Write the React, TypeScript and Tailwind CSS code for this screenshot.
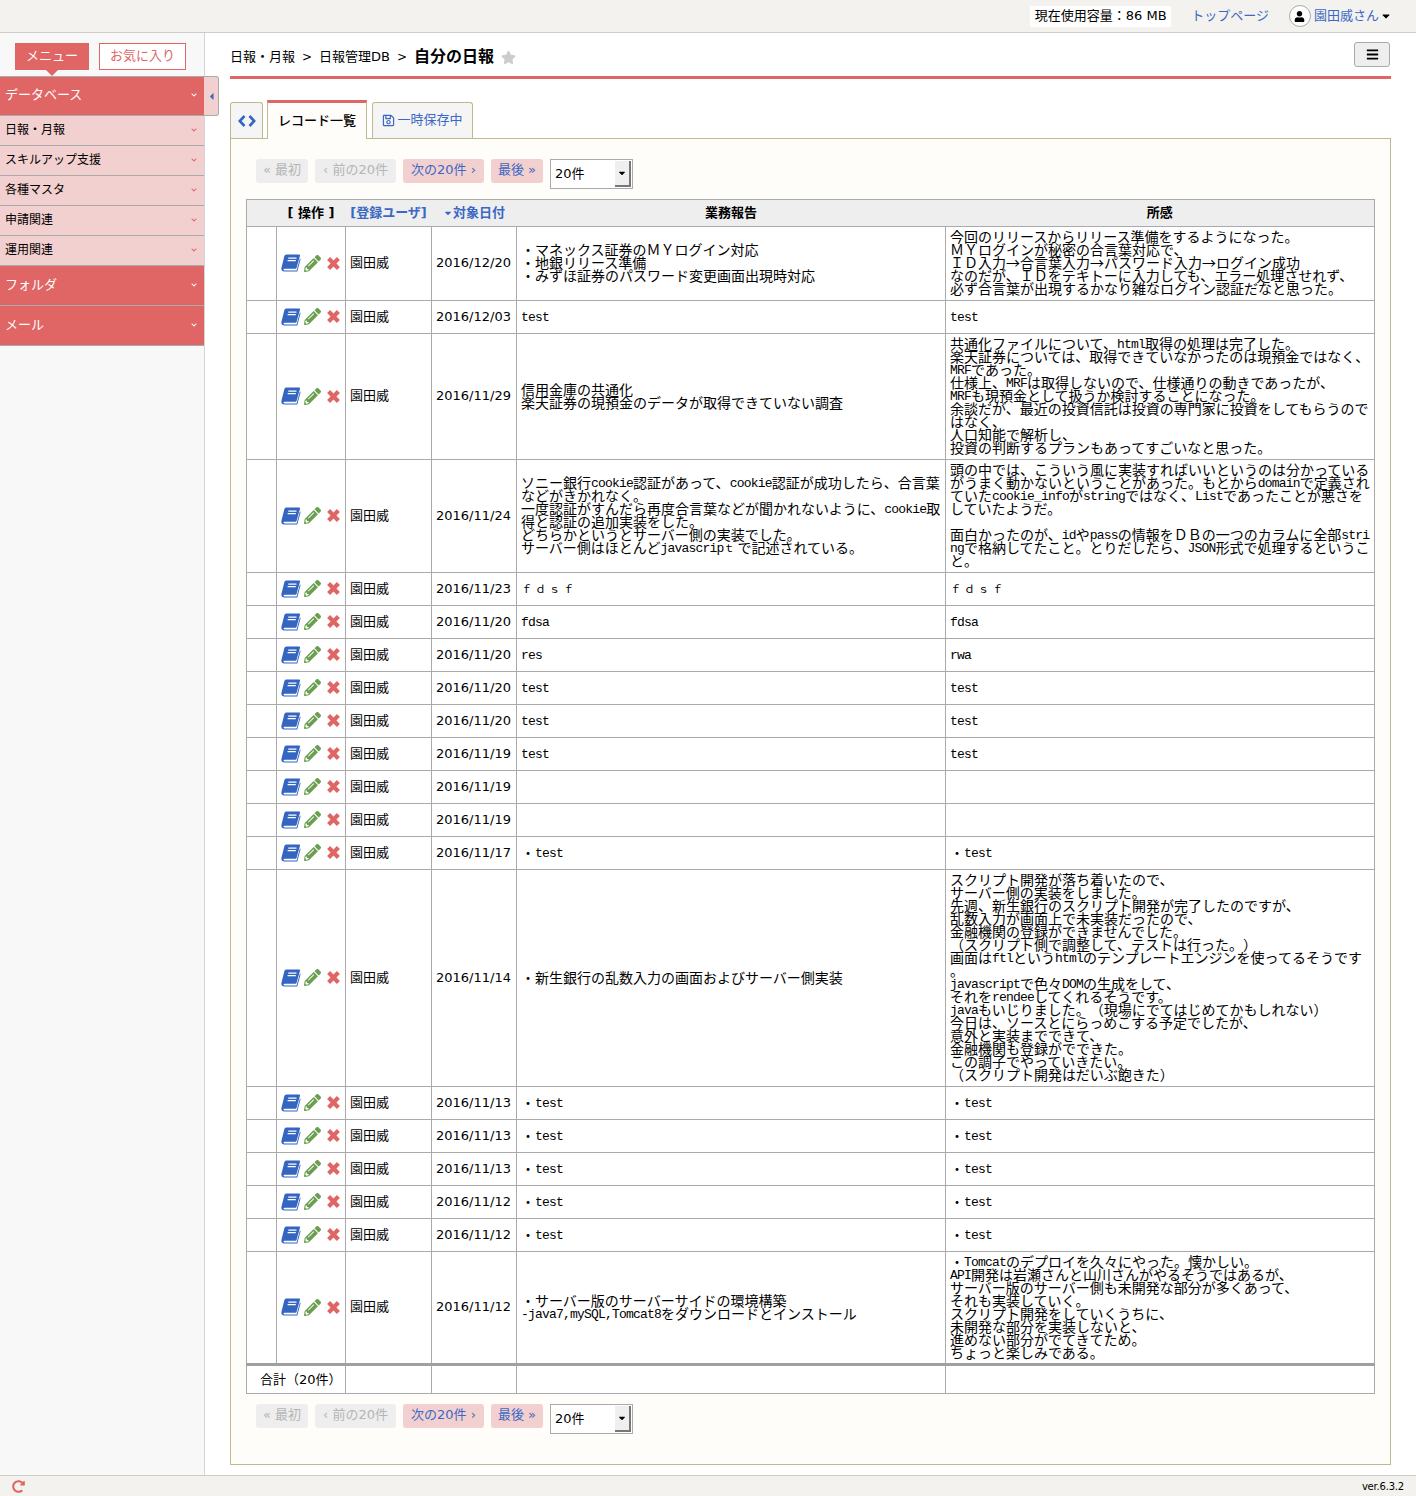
import React from "react";
import { FaBars, FaCaretDown, FaCaretLeft, FaChevronDown, FaPencilAlt, FaRedoAlt, FaRegSave, FaStar, FaUser } from "react-icons/fa";

type Row = { h: string; date: string; report: string[]; note: string[] };

const rows: Row[] = [
  {
    h: "h-[74px]",
    date: "2016/12/20",
    report: ["・マネックス証券のＭＹログイン対応", "・地銀リリース準備", "・みずほ証券のパスワード変更画面出現時対応"],
    note: [
      "今回のリリースからリリース準備をするようになった。",
      "ＭＹログインが秘密の合言葉対応で、",
      "ＩＤ入力→合言葉入力→パスワード入力→ログイン成功",
      "なのだが、ＩＤをテキトーに入力しても、エラー処理させれず、",
      "必ず合言葉が出現するかなり雑なログイン認証だなと思った。",
    ],
  },
  { h: "h-[33px]", date: "2016/12/03", report: ["test"], note: ["test"] },
  {
    h: "h-[126px]",
    date: "2016/11/29",
    report: ["信用金庫の共通化", "楽天証券の現預金のデータが取得できていない調査"],
    note: [
      "共通化ファイルについて、html取得の処理は完了した。",
      "楽天証券については、取得できていなかったのは現預金ではなく、",
      "MRFであった。",
      "仕様上、MRFは取得しないので、仕様通りの動きであったが、",
      "MRFも現預金として扱うか検討することになった。",
      "余談だが、最近の投資信託は投資の専門家に投資をしてもらうので",
      "はなく、",
      "人口知能で解析し、",
      "投資の判断するプランもあってすごいなと思った。",
    ],
  },
  {
    h: "h-[113px]",
    date: "2016/11/24",
    report: [
      "ソニー銀行cookie認証があって、cookie認証が成功したら、合言葉",
      "などがきかれなく。",
      "一度認証がすんだら再度合言葉などが聞かれないように、cookie取",
      "得と認証の追加実装をした。",
      "どちらかというとサーバー側の実装でした。",
      "サーバー側はほとんどjavascripｔで記述されている。",
    ],
    note: [
      "頭の中では、こういう風に実装すればいいというのは分かっている",
      "がうまく動かないということがあった。もとからdomainで定義され",
      "ていたcookie_infoがstringではなく、Listであったことが悪さを",
      "していたようだ。",
      "",
      "面白かったのが、idやpassの情報をＤＢの一つのカラムに全部stri",
      "ngで格納してたこと。とりだしたら、JSON形式で処理するというこ",
      "と。",
    ],
  },
  { h: "h-[33px]", date: "2016/11/23", report: ["ｆｄｓｆ"], note: ["ｆｄｓｆ"] },
  { h: "h-[33px]", date: "2016/11/20", report: ["fdsa"], note: ["fdsa"] },
  { h: "h-[33px]", date: "2016/11/20", report: ["res"], note: ["rwa"] },
  { h: "h-[33px]", date: "2016/11/20", report: ["test"], note: ["test"] },
  { h: "h-[33px]", date: "2016/11/20", report: ["test"], note: ["test"] },
  { h: "h-[33px]", date: "2016/11/19", report: ["test"], note: ["test"] },
  { h: "h-[33px]", date: "2016/11/19", report: [], note: [] },
  { h: "h-[33px]", date: "2016/11/19", report: [], note: [] },
  { h: "h-[33px]", date: "2016/11/17", report: ["・test"], note: ["・test"] },
  {
    h: "h-[217px]",
    date: "2016/11/14",
    report: ["・新生銀行の乱数入力の画面およびサーバー側実装"],
    note: [
      "スクリプト開発が落ち着いたので、",
      "サーバー側の実装をしました。",
      "先週、新生銀行のスクリプト開発が完了したのですが、",
      "乱数入力が画面上で未実装だったので、",
      "金融機関の登録ができませんでした。",
      "（スクリプト側で調整して、テストは行った。）",
      "画面はftlというhtmlのテンプレートエンジンを使ってるそうです",
      "。",
      "javascriptで色々DOMの生成をして、",
      "それをrendeeしてくれるそうです。",
      "javaもいじりました。（現場にでてはじめてかもしれない）",
      "今日は、ソースとにらっめこする予定でしたが、",
      "意外と実装までできて、",
      "金融機関も登録がでできた。",
      "この調子でやっていきたい。",
      "（スクリプト開発はだいぶ飽きた）",
    ],
  },
  { h: "h-[33px]", date: "2016/11/13", report: ["・test"], note: ["・test"] },
  { h: "h-[33px]", date: "2016/11/13", report: ["・test"], note: ["・test"] },
  { h: "h-[33px]", date: "2016/11/13", report: ["・test"], note: ["・test"] },
  { h: "h-[33px]", date: "2016/11/12", report: ["・test"], note: ["・test"] },
  { h: "h-[33px]", date: "2016/11/12", report: ["・test"], note: ["・test"] },
  {
    h: "h-[113px]",
    date: "2016/11/12",
    report: ["・サーバー版のサーバーサイドの環境構築", "-java7,mySQL,Tomcat8をダウンロードとインストール"],
    note: [
      "・Tomcatのデプロイを久々にやった。懐かしい。",
      "API開発は岩瀬さんと山川さんがやるそうではあるが、",
      "サーバー版のサーバー側も未開発な部分が多くあって、",
      "それも実装していく。",
      "スクリプト開発をしていくうちに、",
      "未開発な部分を実装しないと、",
      "進めない部分がでてきてため。",
      "ちょっと楽しみである。",
    ],
  },
];

function MemoLine({ text }: { text: string }) {
  const parts = text.split(/([\x20-\x7e]+|[ｆｄｓｔ]+)/).filter(Boolean);
  return (
    <div className="h-[13px] whitespace-nowrap">
      {parts.map((p, i) =>
        /^[\x20-\x7e]+$/.test(p) ? (
          <span key={i} className="align-[1px] text-[13px] leading-[10px] tracking-[-0.8px] [font-family:'Liberation_Mono',monospace]">
            {p}
          </span>
        ) : /^[ｆｄｓｔ]+$/.test(p) ? (
          <span key={i} className="align-[1px] text-[11px] leading-[10px] tracking-[3px]">
            {p}
          </span>
        ) : (
          <span key={i}>{p}</span>
        ),
      )}
    </div>
  );
}

function Memo({ lines }: { lines: string[] }) {
  return (
    <div className="pb-[2px] text-[14px] leading-[13px] text-black [text-spacing-trim:space-all] [font-family:'Noto_Sans_CJK_JP',sans-serif]">
      {lines.map((l, i) => (
        <MemoLine key={i} text={l} />
      ))}
    </div>
  );
}

function BookIcon() {
  return (
    <svg width="20" height="18" viewBox="0 0 20 18" className="shrink-0">
      <path
        d="M5.2 0.5H18a1 1 0 0 1 1 1.3L15.6 13.8a1.2 1.2 0 0 1-1.2.9H3.6c-1.3 0-1.5 1.7 0 1.7h12l3.2-11.6h.9L16.3 17.5H3C.7 17.5 0 15.6.5 13.6L3.4 2A2 2 0 0 1 5.200.5Z"
        fill="#3465c1"
      />
      <path d="M7.300 4.200h8.200M6.600 6.700h8.200" stroke="#fff" strokeWidth="1.300" />
    </svg>
  );
}

function CrossIcon() {
  return (
    <svg width="15" height="15" viewBox="0 0 15 15" className="ml-[5px] shrink-0">
      <path d="M2.600 2.600 12.400 12.400M12.400 2.600 2.600 12.400" stroke="#e06565" strokeWidth="4.200" />
    </svg>
  );
}

function CodeIcon() {
  return (
    <svg width="18" height="12" viewBox="0 0 18 12">
      <path d="M6.500 1 1.800 6l4.700 5M11.500 1l4.700 5-4.700 5" fill="none" stroke="#3465c1" strokeWidth="2.600" />
    </svg>
  );
}

function Pager() {
  return (
    <div className="flex items-start gap-[7px] pl-[10px]">
      <div className="flex h-[24px] w-[52px] items-center justify-center rounded-[3px] bg-[#eeeeee] pb-[2px] text-[13px] text-[#b5b5b5]">« 最初</div>
      <div className="flex h-[24px] w-[81px] items-center justify-center rounded-[3px] bg-[#eeeeee] pb-[2px] text-[13px] text-[#b5b5b5]">‹ 前の20件</div>
      <div className="flex h-[24px] w-[81px] items-center justify-center rounded-[3px] bg-[#f3d0d0] pb-[2px] text-[13px] text-[#3a68c4]">次の20件 ›</div>
      <div className="flex h-[24px] w-[52px] items-center justify-center rounded-[3px] bg-[#f3d0d0] pb-[2px] text-[13px] text-[#3a68c4]">最後 »</div>
      <div className="flex h-[30px] w-[83px] items-stretch border border-[#aaaaaa] bg-white">
        <div className="flex-1 pl-[4px] pt-[4px] text-[13px] text-black">20件</div>
        <div className="my-[1px] mr-[1px] flex w-[16px] items-center justify-center border-b-2 border-r-2 border-b-[#777777] border-r-[#777777] bg-[#efefef]">
          <FaCaretDown size={10} color="#000" />
        </div>
      </div>
    </div>
  );
}

function MenuHead({ label, first }: { label: string; first?: boolean }) {
  return (
    <div className={`flex items-center justify-between border-b border-[#aaaaaa] bg-[#e06565] pb-[2px] pl-[5px] pr-[7px] text-[13px] text-white ${first ? "h-[39px]" : "h-[40px]"}`}>
      <span>{label}</span>
      <FaChevronDown size={6} color="#fff" />
    </div>
  );
}

function MenuItem({ label }: { label: string }) {
  return (
    <div className="flex h-[30px] items-center justify-between border-b border-[#aaaaaa] bg-[#f3d0d0] pb-[2px] pl-[5px] pr-[7px] text-[12px] text-black">
      <span>{label}</span>
      <FaChevronDown size={6} color="#e06565" />
    </div>
  );
}

const cell = "border border-[#aaaaaa] p-0";
const totalCell = "border border-t-[3px] border-[#aaaaaa] border-t-[#a0a0a0] p-0";

export default function App() {
  return (
    <div className="flex h-[1496px] w-[1416px] flex-col overflow-hidden bg-white text-black [font-family:'DejaVu_Sans','Noto_Sans_CJK_JP',sans-serif]">
      <header className="flex h-[33px] shrink-0 items-center justify-end border-b border-[#cfcdc8] bg-[#f3f2ee] pr-[24px]">
        <div className="flex h-[21px] w-[141px] items-center justify-center bg-white text-[13px] text-black">現在使用容量：86 MB</div>
        <a className="ml-[20px] text-[13px] text-[#3a68c4]">トップページ</a>
        <div className="ml-[20px] flex h-[22px] w-[22px] items-center justify-center rounded-full border border-[#aaaaaa] bg-white">
          <FaUser size={11} color="#000" />
        </div>
        <a className="ml-[3px] text-[13px] text-[#3a68c4]">園田威さん</a>
        <FaCaretDown size={12} color="#000" className="ml-[1px]" />
      </header>

      <div className="flex min-h-0 flex-1">
        <aside className="relative w-[205px] shrink-0 border-r border-[#d5d5d5] bg-[#f8f8f8]">
          <div className="flex h-[43px] items-start gap-[10px] pl-[15px] pt-[10px]">
            <div className="relative flex h-[27px] w-[74px] items-center justify-center bg-[#e06565] pb-[2px] text-[13px] text-white">
              メニュー
              <span className="absolute left-[31px] top-[27px] h-0 w-0 border-x-[6px] border-t-[6px] border-x-transparent border-t-[#e06565]" />
            </div>
            <div className="flex h-[27px] w-[87px] items-center justify-center border border-[#e06565] bg-white pb-[2px] text-[13px] text-[#e06565]">お気に入り</div>
          </div>
          <div className="border-t border-[#aaaaaa]">
            <MenuHead label="データベース" first />
            <MenuItem label="日報・月報" />
            <MenuItem label="スキルアップ支援" />
            <MenuItem label="各種マスタ" />
            <MenuItem label="申請関連" />
            <MenuItem label="運用関連" />
            <MenuHead label="フォルダ" />
            <MenuHead label="メール" />
          </div>
          <div className="absolute left-[204px] top-[43px] flex h-[40px] w-[15px] items-center justify-center rounded-r-[3px] border border-l-0 border-[#aaaaaa] bg-[#f3d0d0]">
            <FaCaretLeft size={11} color="#3a68c4" />
          </div>
        </aside>

        <main className="flex min-w-0 flex-1 flex-col px-[25px]">
          <div className="flex h-[46px] shrink-0 items-center justify-between border-b-[3px] border-[#e06565]">
            <div className="mt-[5px] flex items-center gap-[7px] text-[13px]">
              <span>日報・月報</span>
              <span className="text-[12px]">&gt;</span>
              <span>日報管理DB</span>
              <span className="text-[12px]">&gt;</span>
              <span className="text-[16px] font-bold">自分の日報</span>
              <FaStar size={15} color="#cccccc" />
            </div>
            <div className="mb-[1px] mr-[1px] flex h-[25px] w-[36px] items-center justify-center rounded-[3px] border border-[#aaaaaa] bg-[#eeeeee]">
              <FaBars size={13} color="#000" />
            </div>
          </div>

          <div className="mt-[21px] flex h-[38px] shrink-0 items-end">
            <div className="flex h-[36px] w-[33px] items-center justify-center rounded-t-[3px] border border-b-0 border-[#c2b88d] bg-[#f5f5f5]">
              <CodeIcon />
            </div>
            <div className="relative z-10 ml-[4px] -mb-px flex h-[39px] w-[100px] items-center justify-center border-x border-t-[3px] border-x-[#c2b88d] border-t-[#e06565] bg-[#fffdf9] pb-[1px] text-[13px] font-medium">
              レコード一覧
            </div>
            <div className="ml-[5px] flex h-[36px] w-[101px] items-center justify-center gap-[2px] rounded-t-[3px] border border-b-0 border-[#c2b88d] bg-[#f5f5f5] pb-[1px] text-[13px] text-[#3a68c4]">
              <FaRegSave size={13} color="#3a68c4" />
              一時保存中
            </div>
          </div>

          <div className="mb-[10px] flex min-h-0 flex-1 flex-col border border-[#c2b88d] bg-[#fffdf9] px-[15px] pt-[20px]">
            <Pager />
            <table className="mt-[10px] w-[1128px] table-fixed border-collapse bg-white text-[13px]">
              <colgroup>
                <col className="w-[30px]" />
                <col className="w-[69px]" />
                <col className="w-[86px]" />
                <col className="w-[85px]" />
                <col className="w-[429px]" />
                <col className="w-[429px]" />
              </colgroup>
              <thead>
                <tr className="h-[27px] border border-[#aaaaaa] bg-[#eeeeee] text-[13px] font-bold">
                  <th className="p-0" />
                  <th className="p-0 text-center font-bold">[ 操作 ]</th>
                  <th className="p-0 text-center font-bold whitespace-nowrap text-[#3a68c4]">[登録ユーザ]</th>
                  <th className="p-0 font-bold text-[#3a68c4]">
                    <span className="inline-flex items-center justify-center whitespace-nowrap">
                      <FaCaretDown size={10} color="#3a68c4" />
                      対象日付
                    </span>
                  </th>
                  <th className="p-0 text-center font-bold">業務報告</th>
                  <th className="p-0 text-center font-bold">所感</th>
                </tr>
              </thead>
              <tbody>
                {rows.map((r, i) => (
                  <tr key={i} className={r.h}>
                    <td className={cell} />
                    <td className={cell}>
                      <div className="flex items-center pb-[1px] pl-[4px]">
                        <BookIcon />
                        <FaPencilAlt size={17} color="#6a9e50" className="ml-[3px]" />
                        <CrossIcon />
                      </div>
                    </td>
                    <td className={`${cell} pb-[1px] pl-[4px]`}>園田威</td>
                    <td className={`${cell} pb-[1px] pl-[4px] whitespace-nowrap`}>{r.date}</td>
                    <td className={`${cell} pl-[4px]`}>
                      <Memo lines={r.report} />
                    </td>
                    <td className={`${cell} pl-[4px]`}>
                      <Memo lines={r.note} />
                    </td>
                  </tr>
                ))}
                <tr className="h-[29px]">
                  <td colSpan={2} className={`${totalCell} pl-[13px]`}>
                    合計（20件）
                  </td>
                  <td className={totalCell} />
                  <td className={totalCell} />
                  <td className={totalCell} />
                  <td className={totalCell} />
                </tr>
              </tbody>
            </table>
            <div className="mt-[10px]">
              <Pager />
            </div>
          </div>
        </main>
      </div>

      <footer className="flex h-[21px] shrink-0 items-center justify-between border-t border-[#cfcdc8] bg-[#f3f2ee] px-[12px]">
        <FaRedoAlt size={13} color="#e06565" />
        <span className="text-[10px] tracking-[-0.2px] text-black">ver.6.3.2</span>
      </footer>
    </div>
  );
}
